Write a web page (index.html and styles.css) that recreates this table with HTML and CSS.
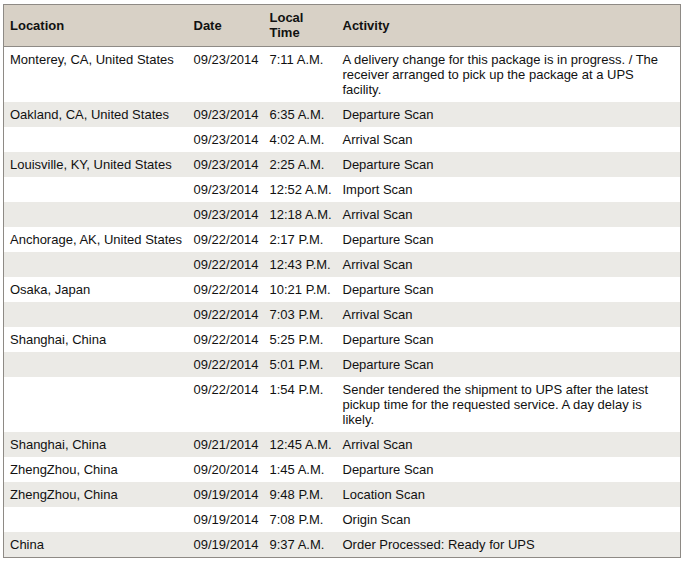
FILE: index.html
```html
<!DOCTYPE html>
<html>
<head>
<meta charset="utf-8">
<link rel="stylesheet" href="styles.css">
</head>
<body>
<div class="wrap">
<table class="track">
<colgroup>
<col class="c-loc"><col class="c-date"><col class="c-time"><col>
</colgroup>
<thead>
<tr><th>Location</th><th>Date</th><th>Local<br>Time</th><th>Activity</th></tr>
</thead>
<tbody>
<tr><td>Monterey, CA, United States</td><td>09/23/2014</td><td>7:11 A.M.</td><td class="act">A delivery change for this package is in progress. / The receiver arranged to pick up the package at a UPS facility.</td></tr>
<tr><td>Oakland, CA, United States</td><td>09/23/2014</td><td>6:35 A.M.</td><td class="act">Departure Scan</td></tr>
<tr><td></td><td>09/23/2014</td><td>4:02 A.M.</td><td class="act">Arrival Scan</td></tr>
<tr><td>Louisville, KY, United States</td><td>09/23/2014</td><td>2:25 A.M.</td><td class="act">Departure Scan</td></tr>
<tr><td></td><td>09/23/2014</td><td>12:52 A.M.</td><td class="act">Import Scan</td></tr>
<tr><td></td><td>09/23/2014</td><td>12:18 A.M.</td><td class="act">Arrival Scan</td></tr>
<tr><td>Anchorage, AK, United States</td><td>09/22/2014</td><td>2:17 P.M.</td><td class="act">Departure Scan</td></tr>
<tr><td></td><td>09/22/2014</td><td>12:43 P.M.</td><td class="act">Arrival Scan</td></tr>
<tr><td>Osaka, Japan</td><td>09/22/2014</td><td>10:21 P.M.</td><td class="act">Departure Scan</td></tr>
<tr><td></td><td>09/22/2014</td><td>7:03 P.M.</td><td class="act">Arrival Scan</td></tr>
<tr><td>Shanghai, China</td><td>09/22/2014</td><td>5:25 P.M.</td><td class="act">Departure Scan</td></tr>
<tr><td></td><td>09/22/2014</td><td>5:01 P.M.</td><td class="act">Departure Scan</td></tr>
<tr><td></td><td>09/22/2014</td><td>1:54 P.M.</td><td class="act">Sender tendered the shipment to UPS after the latest pickup time for the requested service. A day delay is likely.</td></tr>
<tr><td>Shanghai, China</td><td>09/21/2014</td><td>12:45 A.M.</td><td class="act">Arrival Scan</td></tr>
<tr><td>ZhengZhou, China</td><td>09/20/2014</td><td>1:45 A.M.</td><td class="act">Departure Scan</td></tr>
<tr><td>ZhengZhou, China</td><td>09/19/2014</td><td>9:48 P.M.</td><td class="act">Location Scan</td></tr>
<tr><td></td><td>09/19/2014</td><td>7:08 P.M.</td><td class="act">Origin Scan</td></tr>
<tr><td>China</td><td>09/19/2014</td><td>9:37 A.M.</td><td class="act">Order Processed: Ready for UPS</td></tr>
</tbody>
</table>
</div>
</body>
</html>
```
FILE: styles.css
```css
html, body {
  margin: 0;
  padding: 0;
  background: #ffffff;
}
.wrap {
  padding: 4px 4px 0 3px;
}
.track {
  width: 678px;
  border-collapse: collapse;
  table-layout: fixed;
  border: 1px solid #8e8a85;
  font-family: "Liberation Sans", Arial, sans-serif;
  font-size: 13px;
  line-height: 15px;
  color: #111111;
}
.c-loc { width: 184px; }
.c-date { width: 76px; }
.c-time { width: 73px; }
.track th {
  background: #d8d1c6;
  text-align: left;
  font-weight: bold;
  padding: 5px 2px 6px 6px;
  vertical-align: middle;
  border-bottom: 1px solid #8e8a85;
}
.track td {
  padding: 5px 0 5px 6px;
  vertical-align: top;
  white-space: nowrap;
  overflow: visible;
}
.track td.act {
  white-space: normal;
  padding-right: 6px;
}
.track tbody tr:nth-child(even) td {
  background: #ebeae6;
}
```
